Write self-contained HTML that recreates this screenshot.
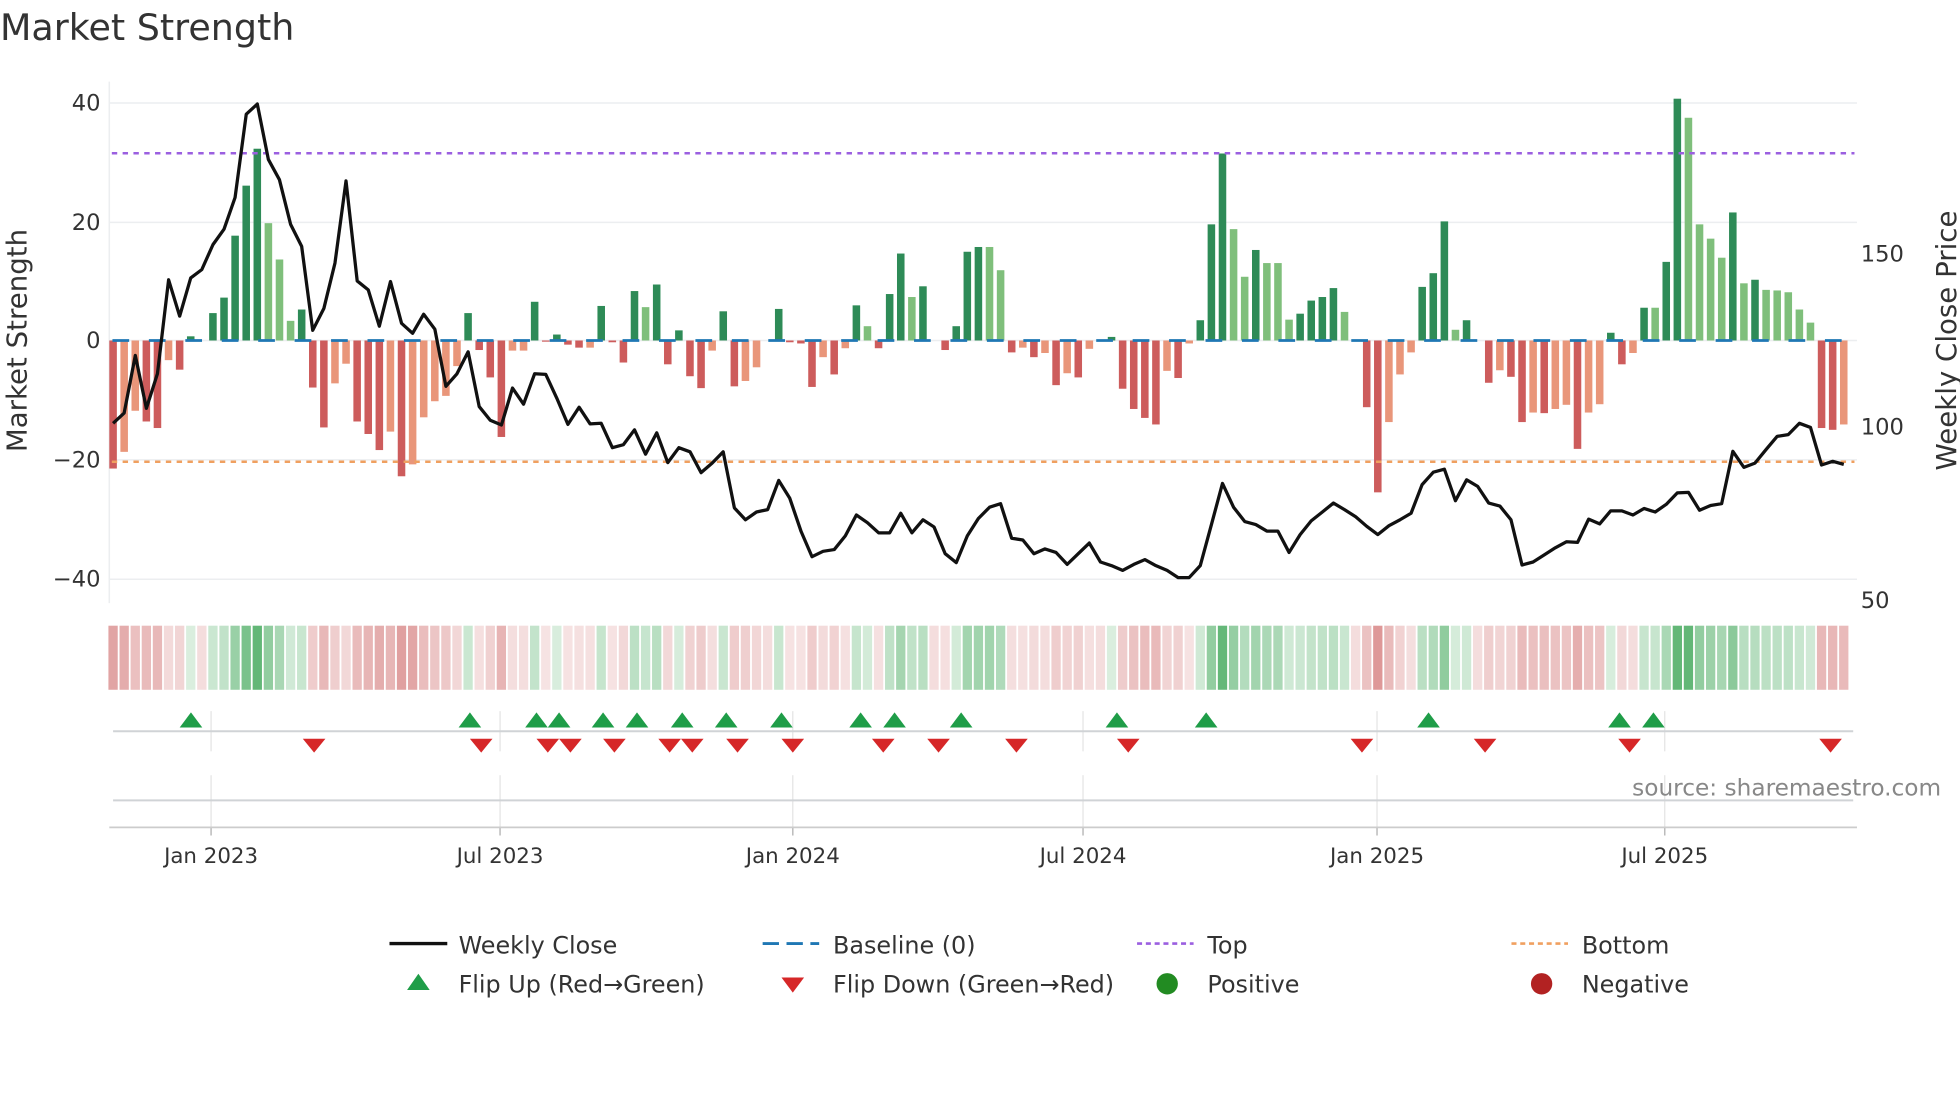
<!DOCTYPE html>
<html><head><meta charset="utf-8">
<style>
html,body{margin:0;padding:0;background:#fff;}
svg{display:block;}
text{font-family:"DejaVu Sans","Liberation Sans",sans-serif;fill:#333;}
</style></head>
<body>
<svg id="s" width="1960" height="1102" viewBox="0 0 1560 877.1" xmlns="http://www.w3.org/2000/svg">
<text x="0" y="32" font-size="29">Market Strength</text>
<g stroke="#eceef0" stroke-width="1.2">
<line x1="87" y1="82" x2="1478" y2="82"/>
<line x1="87" y1="177" x2="1478" y2="177"/>
<line x1="87" y1="271" x2="1478" y2="271"/>
<line x1="87" y1="366" x2="1478" y2="366"/>
<line x1="87" y1="461" x2="1478" y2="461"/>
<line x1="87" y1="65" x2="87" y2="480"/>
</g>
<g font-size="18" text-anchor="end">
<text x="80" y="88">40</text>
<text x="80" y="183">20</text>
<text x="80" y="277">0</text>
<text x="80" y="372">−20</text>
<text x="80" y="467">−40</text>
</g>
<g font-size="18">
<text x="1481" y="208">150</text>
<text x="1481" y="346">100</text>
<text x="1481" y="484">50</text>
</g>
<text transform="translate(21,271) rotate(-90)" font-size="22" text-anchor="middle">Market Strength</text>
<text transform="translate(1557,271) rotate(-90)" font-size="22" text-anchor="middle">Weekly Close Price</text>
<g id="bars"></g>
<line x1="89.5" y1="271" x2="1476" y2="271" stroke="#1f77b4" stroke-width="2.2" stroke-dasharray="13.3 15.7"/>
<line x1="89" y1="122" x2="1476" y2="122" stroke="#9b5fe0" stroke-width="2" stroke-dasharray="4.3 4.3"/>
<line x1="89" y1="367.5" x2="1476" y2="367.5" stroke="#f0a060" stroke-width="2" stroke-dasharray="4.3 4.3"/>
<g id="line"></g>
<g id="heat"></g>
<g stroke="#e4e4e4" stroke-width="1">
<g id="vg"></g>
</g>
<line x1="90" y1="582" x2="1475" y2="582" stroke="#d0d3d6" stroke-width="1.6"/>
<line x1="90" y1="637" x2="1475" y2="637" stroke="#d0d3d6" stroke-width="1.6"/>
<line x1="87" y1="658.5" x2="1478" y2="658.5" stroke="#ccc" stroke-width="1.4"/>
<g id="flips"></g>
<g font-size="17" text-anchor="middle">
<text x="168" y="687">Jan 2023</text>
<text x="398" y="687">Jul 2023</text>
<text x="631" y="687">Jan 2024</text>
<text x="862" y="687">Jul 2024</text>
<text x="1096" y="687">Jan 2025</text>
<text x="1325" y="687">Jul 2025</text>
</g>
<text x="1545" y="633" font-size="18.5" text-anchor="end" style="fill:#888">source: sharemaestro.com</text>
<g font-size="19">
<line x1="310" y1="751" x2="356" y2="751" stroke="#111" stroke-width="2.6"/>
<text x="365" y="759">Weekly Close</text>
<line x1="607" y1="751" x2="652" y2="751" stroke="#1f77b4" stroke-width="2.2" stroke-dasharray="13 6"/>
<text x="663" y="759">Baseline (0)</text>
<line x1="905" y1="751" x2="950" y2="751" stroke="#9b5fe0" stroke-width="2" stroke-dasharray="4 3"/>
<text x="961" y="759">Top</text>
<line x1="1203" y1="751" x2="1248" y2="751" stroke="#f0a060" stroke-width="2" stroke-dasharray="4 3"/>
<text x="1259" y="759">Bottom</text>
<polygon points="324,788 342,788 333,775" fill="#1f9d48"/>
<text x="365" y="790">Flip Up (Red→Green)</text>
<polygon points="622,778 640,778 631,790" fill="#d62728"/>
<text x="663" y="790">Flip Down (Green→Red)</text>
<circle cx="929" cy="783" r="8.5" fill="#228b22"/>
<text x="961" y="790">Positive</text>
<circle cx="1227" cy="783" r="8.5" fill="#b22222"/>
<text x="1259" y="790">Negative</text>
</g>
</svg>
<script>
var B="-21.5D -18.7L -11.8L -13.6D -14.7D -3.3L -4.9D 0.7D 0D 4.6D 7.2D 17.6D 26D 32.2D 19.7L 13.6L 3.3L 5.2D -7.9D -14.6D -7.2L -3.9L -13.6D -15.7D -18.4D -15.3L -22.8D -20.8L -12.9L -10.2L -9.3L -4.3L 4.6D -1.6D -6.2D -16.2D -1.7L -1.7L 6.5D -0.2D 1D -0.7D -1.2D -1.2L 5.8D -0.3D -3.7D 8.3D 5.6L 9.4D -4D 1.7D -6D -8D -1.7L 4.9D -7.7D -6.8L -4.5L 0D 5.3D -0.3D -0.5D -7.8D -2.8L -5.7D -1.3L 5.9D 2.4L -1.3D 7.8D 14.6D 7.3L 9.1D 0D -1.6D 2.4D 14.9D 15.7D 15.7L 11.8L -2D -1.2L -2.8D -2.1L -7.5D -5.5L -6.2D -1.4L 0D 0.6D -8.1D -11.5D -13D -14.1D -5.1L -6.3D -0.5L 3.4D 19.5D 31.4D 18.7L 10.7L 15.2D 13L 13L 3.5L 4.5D 6.7D 7.3D 8.8D 4.8L 0D -11.2D -25.5D -13.7L -5.7L -2L 9D 11.3D 20D 1.8L 3.4D 0D -7.1D -5L -6.1D -13.7D -12.1L -12.2D -11.5L -10.8L -18.2D -12.1L -10.7L 1.3D -4D -2.1L 5.5D 5.5L 13.2D 40.6D 37.4L 19.5L 17.1L 13.9L 21.5D 9.6L 10.2D 8.5L 8.4L 8.1L 5.2L 3L -14.7D -15D -14.1L".split(" ");
var L=[-13.9,-12.2,-2.5,-11.4,-5.6,10.2,4.1,10.5,11.9,16.1,18.7,24,38,39.7,30.4,27,19.5,15.8,1.7,5.4,13,26.8,10,8.5,2.4,9.9,2.9,1.2,4.4,1.9,-7.7,-5.6,-1.9,-11.1,-13.4,-14.2,-8,-10.7,-5.6,-5.7,-9.7,-14.1,-11.2,-14,-13.9,-18,-17.5,-15,-19.1,-15.5,-20.5,-18,-18.7,-22.2,-20.6,-18.7,-28.1,-30.1,-28.8,-28.4,-23.5,-26.5,-32,-36.3,-35.4,-35.1,-32.8,-29.3,-30.6,-32.3,-32.3,-29,-32.3,-30.1,-31.3,-35.8,-37.3,-32.8,-29.9,-28,-27.4,-33.2,-33.5,-35.8,-35,-35.6,-37.6,-35.8,-34,-37.2,-37.8,-38.6,-37.6,-36.8,-37.8,-38.6,-39.8,-39.8,-37.8,-30.9,-24,-28,-30.4,-30.9,-32,-32,-35.6,-32.6,-30.3,-28.8,-27.3,-28.4,-29.6,-31.2,-32.6,-31.1,-30.1,-29,-24.2,-22.1,-21.6,-26.9,-23.4,-24.5,-27.3,-27.8,-30.1,-37.7,-37.2,-36,-34.8,-33.8,-33.9,-30,-30.8,-28.6,-28.6,-29.3,-28.2,-28.8,-27.5,-25.6,-25.5,-28.5,-27.7,-27.4,-18.6,-21.3,-20.6,-18.3,-16.1,-15.8,-13.9,-14.6,-20.9,-20.3,-20.8];
var NS="http://www.w3.org/2000/svg";
function el(t,a,p){var e=document.createElementNS(NS,t);for(var k in a)e.setAttribute(k,a[k]);p.appendChild(e);return e;}
var X0=90,DX=8.83,U=4.74,Y0=271;
var gb=document.getElementById("bars"),gh=document.getElementById("heat");
var cols={DP:"#2e8b57",LP:"#7fbf7b",DN:"#cd5c5c",LN:"#e9967a"};
for(var i=0;i<B.length;i++){
 var s=B[i],v=parseFloat(s),f=s.slice(-1),x=X0+DX*i;
 if(v!==0){
  var h=Math.abs(v)*U,y=v>0?Y0-h:Y0;
  el("rect",{x:x-3,y:y,width:6,height:h,fill:cols[f+(v>0?"P":"N")]},gb);
 }
 var a=0.18+0.62*Math.min(Math.abs(v)/32,1);
 var c=v>0?"rgba(60,165,85,"+a+")":"rgba(200,85,85,"+(a*0.9)+")";
 if(v===0)c="rgba(200,85,85,0.2)";
 el("rect",{x:x-4.4+0.7,y:498,width:7.4,height:51,fill:c},gh);
}
var d="";for(var i=0;i<L.length;i++){d+=(i?"L":"M")+(X0+DX*i).toFixed(1)+","+(Y0-L[i]*U).toFixed(1);}
el("path",{d:d,fill:"none",stroke:"#111","stroke-width":2.6,"stroke-linejoin":"round"},document.getElementById("line"));
var vg=document.getElementById("vg");
[168,398,631,862,1096,1325].forEach(function(x){
 el("line",{x1:x,y1:566,x2:x,y2:598},vg);
 el("line",{x1:x,y1:617,x2:x,y2:658},vg);
 el("line",{x1:x,y1:658,x2:x,y2:665,stroke:"#bbb","stroke-width":1.2},vg);
});
var gf=document.getElementById("flips");
[152,374,427,445,480,507,543,578,622,685,712,765,889,960,1137,1289,1316].forEach(function(x){
 el("polygon",{points:(x-9)+",579 "+(x+9)+",579 "+x+",567",fill:"#1f9d48"},gf);});
[250,383,436,454,489,533,551,587,631,703,747,809,898,1084,1182,1297,1457].forEach(function(x){
 el("polygon",{points:(x-9)+",588 "+(x+9)+",588 "+x+",599",fill:"#d62728"},gf);});
</script>
</body></html>
